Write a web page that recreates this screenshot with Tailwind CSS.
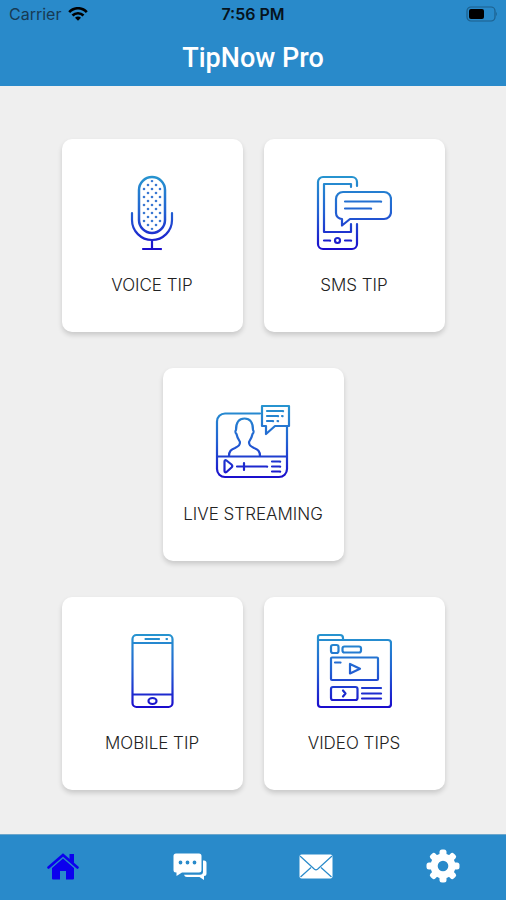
<!DOCTYPE html>
<html lang="en">
<head>
<meta charset="utf-8">
<meta name="viewport" content="width=device-width, initial-scale=1">
<title>TipNow Pro</title>
<script src="https://cdn.jsdelivr.net/npm/@tailwindcss/browser@4"></script>
</head>
<body class="flex min-h-screen flex-col bg-[#efefef] font-['Inter',sans-serif]">
<svg class="absolute h-0 w-0" aria-hidden="true">
  <defs>
    <linearGradient id="ink" gradientUnits="userSpaceOnUse" x1="0" y1="0" x2="0" y2="76">
      <stop offset="0" stop-color="#2796cf"/><stop offset="0.5" stop-color="#2260d2"/><stop offset="1" stop-color="#1a08cc"/>
    </linearGradient>
    <pattern id="mesh" width="8" height="8" patternUnits="userSpaceOnUse" x="26" y="4">
      <circle cx="4" cy="2" r="1.3" fill="#3a78d2"/><circle cx="0" cy="6" r="1.3" fill="#3a78d2"/><circle cx="8" cy="6" r="1.3" fill="#3a78d2"/>
    </pattern>
  </defs>
</svg>

<header class="bg-[#298aca]">
  <div class="grid h-7 grid-cols-3 items-center px-[9px] text-[16px]">
    <div class="flex items-center gap-[7px] text-[#173a54]">
      <span>Carrier</span>
      <svg class="h-[14px] w-5 text-black" viewBox="0 0 20 14" fill="none" stroke="currentColor" stroke-width="2.6" aria-label="Wi-Fi">
        <path d="M1.2 5.2C6-.1 14-.1 18.8 5.2M4.5 8.5C7.5 5.4 12.5 5.4 15.5 8.5"/>
        <path d="M10 13.8 7 10.7C8.7 9.1 11.3 9.1 13 10.7Z" fill="currentColor" stroke="none"/>
      </svg>
    </div>
    <span class="text-center font-semibold text-[#06131d]">7:56 PM</span>
    <svg class="h-4 w-8 justify-self-end" viewBox="0 0 32 16" aria-label="Battery">
      <rect x="2" y="1" width="28" height="14" rx="4" fill="none" stroke="#1c5f8c" stroke-width="1.2"/>
      <rect x="4" y="3" width="15" height="10" rx="2" fill="#000"/>
      <path d="M31 6v4c1-.5 1-3.5 0-4" fill="#1c5f8c"/>
    </svg>
  </div>
  <h1 class="flex h-[58px] items-center justify-center pt-0.5 font-['Roboto',sans-serif] text-[27px] font-medium text-white">TipNow Pro</h1>
</header>

<main class="flex-1 px-5 pt-[53px] pb-[43px]">
  <div class="mx-auto grid max-w-[383px] grid-cols-4 gap-x-[21px] gap-y-9 text-[17px] leading-6 font-light text-[#222]">
    <button class="col-span-2 flex flex-col items-center gap-[22px] rounded-[10px] bg-white pt-9 pb-[35px] shadow-[0_3px_5px_rgba(0,0,0,0.16)]">
      <svg class="size-[76px]" viewBox="0 0 76 76" fill="none" stroke="url(#ink)" stroke-width="2.2" stroke-linecap="round" aria-hidden="true">
        <rect x="28" y="5" width="20" height="50" rx="10" fill="url(#mesh)" stroke="none"/>
        <rect x="25" y="2" width="26" height="56" rx="13" stroke-width="2.5"/>
        <path d="M18 38v7a20 20 0 0 0 40 0v-7M38 65v9M29 74h18l.01.01"/>
      </svg>
      <span>VOICE TIP</span>
    </button>
    <button class="col-span-2 flex flex-col items-center gap-[22px] rounded-[10px] bg-white pt-9 pb-[35px] shadow-[0_3px_5px_rgba(0,0,0,0.16)]">
      <svg class="size-[76px]" viewBox="0 0 76 76" fill="none" stroke="url(#ink)" stroke-width="2.2" stroke-linecap="round" stroke-linejoin="round" aria-hidden="true">
        <path d="M41 11V7a5 5 0 0 0-5-5H7a5 5 0 0 0-5 5v62a5 5 0 0 0 5 5h29a5 5 0 0 0 5-5V49M35 12V9H8v48h27v-8"/>
        <circle cx="21.5" cy="65.5" r="2.5"/>
        <path d="M8 65.500h6l.1.1M29 65.500h6l.1.1"/>
        <path d="M27 17h41a7 7 0 0 1 7 7v13a7 7 0 0 1-7 7H34l-8 6.500V44a6 6 0 0 1-6-6V24a7 7 0 0 1 7-7Z"/>
        <path d="M29 26.500h36l.1.1M29 33.500h26l.1.1"/>
      </svg>
      <span>SMS TIP</span>
    </button>
    <button class="col-span-2 col-start-2 flex flex-col items-center gap-[22px] rounded-[10px] bg-white pt-9 pb-[35px] shadow-[0_3px_5px_rgba(0,0,0,0.16)]">
      <svg class="size-[76px]" viewBox="0 0 76 76" fill="none" stroke="url(#ink)" stroke-width="2.2" stroke-linecap="round" stroke-linejoin="round" aria-hidden="true">
        <path d="M45 9.500H10a8 8 0 0 0-8 8V65a8 8 0 0 0 8 8h54a8 8 0 0 0 8-8V23M2 52.500h70l.01.01"/>
        <path d="M47 2h27v20H60l-9 8v-8h-4Z"/>
        <path d="M52 7h16l.1.1M52 12h11l.1.1M67 12h.5l.1.1M52 17h6l.1.1M62.500 17h.5l.1.1"/>
        <path d="M14 52c0-5 2-6.500 6-8 4-2 5-3 5-6-2-3-3-5-3.500-8-1-1-1.500-3-.5-4 0-8 3-11.500 8.500-11.500S38 18 38 26c1 1 .5 3-.5 4-.5 3-1.500 5-3.500 8 0 3 1 4 5 6 4 1.500 6 3 6 8"/>
        <path d="M9.500 57.500v9.500c0 1.500 1 1.500 2 1l5-4.500c1-1 1-2 0-3l-5-4c-1-.5-2-.5-2 1Z"/>
        <path d="M22 62.500h30l.1.1M29 59v7M57 57.500h8l.1.1M57 62.500h8l.1.1M57 67.500h8l.1.1"/>
      </svg>
      <span>LIVE STREAMING</span>
    </button>
    <button class="col-span-2 col-start-1 flex flex-col items-center gap-[22px] rounded-[10px] bg-white pt-9 pb-[35px] shadow-[0_3px_5px_rgba(0,0,0,0.16)]">
      <svg class="size-[76px]" viewBox="0 0 76 76" fill="none" stroke="url(#ink)" stroke-width="2.2" stroke-linecap="round" aria-hidden="true">
        <rect x="18.500" y="2" width="40" height="72" rx="4"/>
        <path d="M19 10h39l.01.01M19 61.500h39l.01.01M31.500 6h13.500l.01.01M52.500 6h.5l.01.01"/>
        <ellipse cx="38.500" cy="68" rx="4" ry="3"/>
      </svg>
      <span>MOBILE TIP</span>
    </button>
    <button class="col-span-2 flex flex-col items-center gap-[22px] rounded-[10px] bg-white pt-9 pb-[35px] shadow-[0_3px_5px_rgba(0,0,0,0.16)]">
      <svg class="size-[76px]" viewBox="0 0 76 76" fill="none" stroke="url(#ink)" stroke-width="2.2" stroke-linecap="round" stroke-linejoin="round" aria-hidden="true">
        <path d="M2 7V4a2 2 0 0 1 2-2h20a3 3 0 0 1 3 3v2h45a3 3 0 0 1 3 3v61a3 3 0 0 1-3 3H5a3 3 0 0 1-3-3ZM2 7h25"/>
        <rect x="15" y="12" width="7.500" height="8" rx="2"/>
        <rect x="26.500" y="13.500" width="18.500" height="6" rx="2"/>
        <rect x="15" y="24.500" width="47" height="22.500" rx="1"/>
        <path d="M19 29.500h5.500l.01.01M34 31v9.500l10-4.750Z"/>
        <rect x="15" y="54" width="26.500" height="13" rx="2"/>
        <path d="m27 57.500 2.500 3-2.500 3M46 55h19l.01.01M46 60.500h19l.01.01M46 65.500h19l.01.01"/>
      </svg>
      <span>VIDEO TIPS</span>
    </button>
  </div>
</main>

<nav class="grid h-[66px] grid-cols-4 border-t border-[#6ca6cb] bg-[#298aca] pb-[3px] text-white" aria-label="Main">
  <a href="#home" aria-label="Home" aria-current="page" class="flex items-center justify-center text-[#0c00ee]">
    <svg class="h-[27px] w-8" viewBox="0 0 32 27" fill="currentColor">
      <path d="M16 5.500 27 15v10.500a1 1 0 0 1-1 1h-7V18h-6v8.500H6a1 1 0 0 1-1-1V15Z"/>
      <path d="M1.500 14.500 16 1.900l14.500 12.600" fill="none" stroke="#298aca" stroke-width="4.500"/>
      <path d="M22.500 1H27v9.500l-4.500-4Z"/>
      <path d="M1.500 14.500 16 1.900l14.500 12.600" fill="none" stroke="currentColor" stroke-width="2.600" stroke-linecap="round"/>
    </svg>
  </a>
  <a href="#chat" aria-label="Chat" class="flex items-center justify-center">
    <svg class="h-[27px] w-[34px]" viewBox="0 0 34 27" fill="currentColor">
      <path d="M30 7.500h1a2.500 2.500 0 0 1 2.500 2.500v10.500a2.500 2.500 0 0 1-2.500 2.500v4l-4.500-3H14a3 3 0 0 1-3-2.200h16a3 3 0 0 0 3-3Z"/>
      <path fill-rule="evenodd" d="M3 .5h23A2.500 2.500 0 0 1 28.500 3v14a2.500 2.500 0 0 1-2.500 2.500H9L3.500 23v-3.500H3A2.500 2.500 0 0 1 .5 17V3A2.500 2.500 0 0 1 3 .5ZM7.500 7.600a1.900 1.900 0 1 0 0 3.800 1.900 1.900 0 0 0 0-3.800Zm7 0a1.900 1.900 0 1 0 0 3.800 1.900 1.900 0 0 0 0-3.800Zm7 0a1.900 1.900 0 1 0 0 3.800 1.900 1.900 0 0 0 0-3.800Z"/>
    </svg>
  </a>
  <a href="#mail" aria-label="Mail" class="flex items-center justify-center">
    <svg class="h-[25px] w-[34px]" viewBox="0 0 34 25" fill="currentColor">
      <rect x=".5" y=".5" width="33" height="24" rx="2"/>
      <path d="m1 2 14.500 13.300q1.500 1.200 3 0L33 2M1.500 23 12 13.500M32.500 23 22 13.500" fill="none" stroke="#298aca" stroke-width="1.200"/>
    </svg>
  </a>
  <a href="#settings" aria-label="Settings" class="flex items-center justify-center">
    <svg class="size-[34px]" viewBox="-17 -17 34 34">
      <g fill="currentColor">
        <circle r="12.500"/>
        <g id="teeth"><rect x="-3.500" y="-16.500" width="7" height="33" rx="2.500"/><rect x="-16.500" y="-3.500" width="33" height="7" rx="2.500"/></g>
        <use href="#teeth" transform="rotate(45)"/>
      </g>
      <circle r="5.300" fill="#298aca"/>
    </svg>
  </a>
</nav>
</body>
</html>
